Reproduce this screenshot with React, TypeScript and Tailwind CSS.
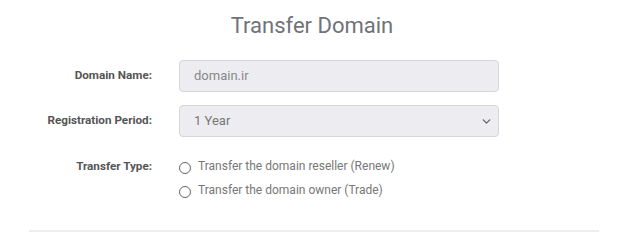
import { ChevronDown } from 'lucide-react';

const font = { fontFamily: 'Roboto, "Liberation Sans", sans-serif' };

export default function App() {
  return (
    <div className="w-[624px] h-[239px] bg-white overflow-hidden" style={font}>
      <h1 className="pt-[12px] text-center text-[22px] leading-[28px] text-[#6f737a]">Transfer Domain</h1>

      <div className="mt-[20px] flex flex-col gap-[13px]">
        <div className="flex items-center">
          <label className="w-[152px] text-right text-[11.7px] font-bold text-[#555]">Domain Name:</label>
          <div className="ml-[27px] w-[320px] h-[32px] rounded-[4px] border border-[#d6d6d9] bg-[#ededf1] px-[14px] flex items-center text-[13px] text-[#888]">
            domain.ir
          </div>
        </div>

        <div className="flex items-center">
          <label className="w-[152px] text-right text-[11.7px] font-bold text-[#555]">Registration Period:</label>
          <div className="ml-[27px] w-[320px] h-[32px] rounded-[4px] border border-[#d6d6d9] bg-[#ededf1] pl-[14px] pr-[5px] flex items-center justify-between text-[13px] text-[#777]">
            <span>1 Year</span>
            <ChevronDown size={13} strokeWidth={2.5} className="text-[#666]" />
          </div>
        </div>

        <div className="flex items-start mt-[8px]">
          <label className="w-[152px] text-right text-[11.7px] font-bold text-[#555] leading-[16px]">Transfer Type:</label>
          <div className="ml-[27px] flex flex-col gap-[8px]">
            {['Transfer the domain reseller (Renew)', 'Transfer the domain owner (Trade)'].map((t) => (
              <div key={t} className="flex items-center">
                <span className="w-[12px] h-[12px] rounded-full border border-[#666] bg-white mt-[3px]" />
                <span className="ml-[7px] text-[12px] leading-[16px] text-[#777]">{t}</span>
              </div>
            ))}
          </div>
        </div>
      </div>

      <div className="ml-[29px] mr-[25px] mt-[32px] h-[2px] bg-[#eeeeee]" />
    </div>
  );
}
